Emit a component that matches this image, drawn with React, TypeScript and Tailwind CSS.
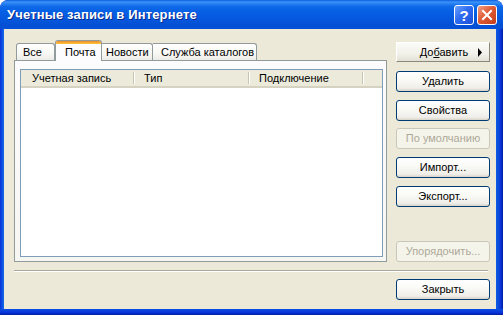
import React from "react";

const F = { fontFamily: '"Liberation Sans", Arial, sans-serif' };

function XpButton({
  label,
  disabled,
  className = "",
}: {
  label: React.ReactNode;
  disabled?: boolean;
  className?: string;
}) {
  return (
    <div
      className={
        "w-[94px] h-[21px] rounded-[3px] border flex items-center justify-center text-[11px] leading-none " +
        (disabled
          ? "border-[#c9c7ba] bg-[#f5f4ea] text-[#aca899] "
          : "border-[#003c74] bg-[linear-gradient(180deg,#ffffff_0%,#fafaf7_40%,#efeee9_85%,#d8d3c8_100%)] text-black ") +
        className
      }
    >
      {label}
    </div>
  );
}

function Divider() {
  return <div className="w-[1px] h-[12px] self-center bg-[#c7c5b2] shadow-[1px_0_0_#ffffff]" />;
}

export default function App() {
  return (
    <div
      className="w-[503px] h-[315px] overflow-hidden flex flex-col rounded-t-[8px] bg-[#0831d9]"
      style={F}
    >
      {/* Title bar */}
      <div className="h-[29px] shrink-0 flex items-center pl-[7px] pr-[6px] rounded-t-[8px] bg-[linear-gradient(180deg,#0a5fdf_0%,#3d92f8_7%,#2a83f2_12%,#0f6ae8_22%,#0660e4_40%,#0558de_65%,#0450d4_85%,#0650d8_100%)]">
        <div className="text-white font-bold text-[13px] tracking-[0.15px] [text-shadow:1px_1px_0_#0a2a8a] flex-1">
          Учетные записи в Интернете
        </div>
        <div className="flex gap-[3px] mt-[1px]">
          <div className="w-[20px] h-[20px] rounded-[3px] border border-white bg-[linear-gradient(135deg,#6ea2ff_0%,#2e6cf0_45%,#1a4fd8_100%)] flex items-center justify-center text-white font-bold text-[15px] leading-none">
            ?
          </div>
          <div className="w-[20px] h-[20px] rounded-[3px] border border-white bg-[linear-gradient(135deg,#f0a088_0%,#e05c36_45%,#c13b1c_100%)] flex items-center justify-center">
            <svg width="12" height="12" viewBox="0 0 12 12">
              <path d="M2 2 L10 10 M10 2 L2 10" stroke="white" strokeWidth="2" strokeLinecap="square" />
            </svg>
          </div>
        </div>
      </div>

      {/* Body with side borders */}
      <div className="flex flex-1 min-h-0">
        <div className="w-[4px] bg-[linear-gradient(90deg,#0831d9_0%,#0a4fe0_50%,#166aee_100%)]" />
        <div className="flex-1 flex flex-col bg-[#ece9d8] h-[280px]">
          <div className="flex pl-[10px] pt-[11px]">
            {/* Left: tabs + panel */}
            <div className="w-[373px] flex flex-col">
              <div className="h-[20px] flex items-end pl-[2px] text-[11px] text-black relative z-10">
                <div className="w-[39px] h-[17px] border border-b-0 border-[#919b9c] rounded-t-[3px] bg-[linear-gradient(180deg,#ffffff_0%,#f7f7f4_60%,#ecebe6_100%)] flex items-center pl-[6px]">
                  Все
                </div>
                <div className="w-[47px] h-[21px] -mb-[1px] border border-b-0 border-[#919b9c] rounded-t-[3px] bg-[#fcfcfe] flex flex-col overflow-hidden">
                  <div className="h-[3px] bg-[linear-gradient(180deg,#e68b2c_0%,#ffc73c_100%)]" />
                  <div className="flex-1 flex items-center pl-[9px]">Почта</div>
                </div>
                <div className="w-[51px] h-[17px] border border-b-0 border-l-0 border-[#919b9c] rounded-tr-[3px] bg-[linear-gradient(180deg,#ffffff_0%,#f7f7f4_60%,#ecebe6_100%)] flex items-center pl-[4px]">
                  Новости
                </div>
                <div className="w-[104px] h-[17px] border border-b-0 border-l-0 border-[#919b9c] rounded-tr-[3px] bg-[linear-gradient(180deg,#ffffff_0%,#f7f7f4_60%,#ecebe6_100%)] flex items-center pl-[8px]">
                  Служба каталогов
                </div>
              </div>
              <div className="h-[202px] border border-[#919b9c] bg-[linear-gradient(180deg,#fcfcfe_0%,#f6f6f2_100%)] pl-[5px] pr-[3px] pt-[8px] pb-[4px]">
                <div className="h-full border border-[#7f9db9] bg-white flex flex-col">
                  <div className="h-[18px] flex text-[11px] text-black bg-[#ebeadb] border-b-[2px] border-[#d6d2c2]">
                    <div className="w-[112px] flex items-center pl-[11px]">Учетная запись</div>
                    <Divider />
                    <div className="w-[114px] flex items-center pl-[10px]">Тип</div>
                    <Divider />
                    <div className="w-[113px] flex items-center pl-[10px]">Подключение</div>
                    <Divider />
                    <div className="flex-1" />
                  </div>
                </div>
              </div>
            </div>

            {/* Right buttons */}
            <div className="ml-[9px] w-[94px] flex flex-col text-[11px]">
              <div className="mt-[2px] w-[94px] h-[20px] border-t border-l border-white border-b border-r border-b-[#8a887c] border-r-[#8a887c] bg-[linear-gradient(180deg,#fbfbf8_0%,#f2f1ea_60%,#e3e1d5_100%)] flex items-center text-black relative">
                <span className="flex-1 text-center pl-[2px]">
                  До<span className="underline">б</span>авить
                </span>
                <svg width="6" height="9" viewBox="0 0 6 9" className="absolute right-[6px] top-[5px]">
                  <path d="M1 0 L5 4.5 L1 9 Z" fill="black" />
                </svg>
              </div>
              <XpButton label="Удалить" className="mt-[9px]" />
              <XpButton label="Свойства" className="mt-[8px]" />
              <XpButton label="По умолчанию" disabled className="mt-[7px]" />
              <XpButton label="Импорт..." className="mt-[8px]" />
              <XpButton label="Экспорт..." className="mt-[8px]" />
              <XpButton label="Упорядочить..." disabled className="mt-[34px]" />
            </div>
          </div>

          {/* Separator */}
          <div className="ml-[10px] mt-[8px] w-[474px] h-[2px] border-t border-[#aca899] border-b border-b-white" />

          <div className="pl-[392px] mt-[7px]">
            <XpButton label="Закрыть" className="text-[11px]" />
          </div>
        </div>
        <div className="w-[7px] bg-[linear-gradient(90deg,#0c5ce8_0%,#0a4ad8_40%,#0831d9_70%,#001ea0_100%)]" />
      </div>
      <div className="h-[6px] shrink-0 bg-[linear-gradient(180deg,#0a4fe0_0%,#0831d9_60%,#001ea0_100%)]" />
    </div>
  );
}
